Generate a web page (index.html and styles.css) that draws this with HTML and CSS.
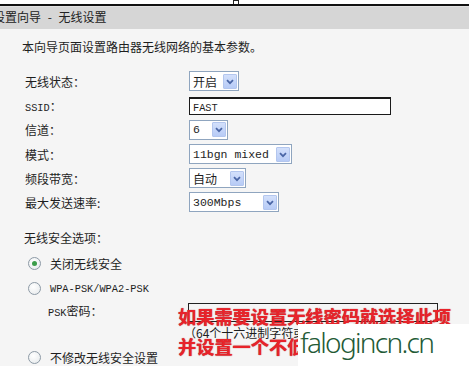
FILE: index.html
```html
<!DOCTYPE html>
<html lang="zh-CN">
<head>
  <meta charset="UTF-8">
  <title>设置向导 - 无线设置</title>
  <link rel="stylesheet" href="styles.css">
</head>
<body>
  <div class="frame">
    <div class="topstrip"><span class="handle"></span></div>
    <div class="title">设置向导 - 无线设置</div>

    <div class="content">
      <p class="intro">本向导页面设置路由器无线网络的基本参数。</p>

      <div class="form">
        <div class="row">
          <span class="label">无线状态：</span>
          <span class="select w-state"><span class="val">开启</span><span class="btn"><svg viewBox="0 0 14 14"><path d="M3.5 5.5 L7 9 L10.5 5.5"/></svg></span></span>
        </div>
        <div class="row">
          <span class="label"><span class="lat">SSID</span>：</span>
          <span class="text-input"><span class="lat">FAST</span></span>
        </div>
        <div class="row">
          <span class="label">信道：</span>
          <span class="select w-chan"><span class="val lat-big">6</span><span class="btn"><svg viewBox="0 0 14 14"><path d="M3.5 5.5 L7 9 L10.5 5.5"/></svg></span></span>
        </div>
        <div class="row">
          <span class="label">模式：</span>
          <span class="select w-mode"><span class="val lat-big">11bgn mixed</span><span class="btn"><svg viewBox="0 0 14 14"><path d="M3.5 5.5 L7 9 L10.5 5.5"/></svg></span></span>
        </div>
        <div class="row">
          <span class="label">频段带宽：</span>
          <span class="select w-band"><span class="val">自动</span><span class="btn"><svg viewBox="0 0 14 14"><path d="M3.5 5.5 L7 9 L10.5 5.5"/></svg></span></span>
        </div>
        <div class="row">
          <span class="label">最大发送速率:</span>
          <span class="select w-rate"><span class="val lat-big">300Mbps</span><span class="btn"><svg viewBox="0 0 14 14"><path d="M3.5 5.5 L7 9 L10.5 5.5"/></svg></span></span>
        </div>
      </div>

      <div class="sec-title">无线安全选项：</div>
      <div class="opt first"><span class="radio on"></span>关闭无线安全</div>
      <div class="opt"><span class="radio"></span><span class="lat">WPA-PSK/WPA2-PSK</span></div>
      <div class="psk">
        <span class="psk-label"><span class="lat">PSK</span>密码：</span>
        <span class="psk-box"></span>
      </div>
      <div class="hint">（64个十六进制字符或8-63个ASCII码字符）</div>
      <div class="opt last"><span class="radio"></span>不修改无线安全设置</div>
    </div>

    <div class="note">如果需要设置无线密码就选择此项<br>并设置一个不低于8位的密码</div>
    <div class="mark">falogincn.cn</div>
  </div>
</body>
</html>
```

FILE: styles.css
```css
body {
  margin: 0;
  background: #f5f5f5;
  font-family: "Noto Sans CJK SC", sans-serif;
  font-size: 12px;
  color: #1e1e1e;
}
.frame {
  position: relative;
  width: 469px;
  height: 366px;
  overflow: hidden;
  background: #f5f5f5;
}
.topstrip {
  height: 4px;
  background: #fff;
  border-bottom: 2px solid #111;
  display: flex;
  justify-content: center;
}
.handle {
  width: 6px;
  height: 4px;
  border: 1px solid #222;
  border-bottom: none;
  margin-left: 2px;
  box-sizing: border-box;
}
.title {
  height: 23px;
  line-height: 19px;
  background: #d6d6d6;
  border-top: 1px solid #e2e2e2;
  box-sizing: border-box;
  text-indent: -7px;
  word-spacing: 4px;
  font-size: 12px;
  color: #222;
  white-space: nowrap;
}
.content {
  padding-left: 22px;
}
.intro {
  margin: 10px 0 0;
  line-height: 16px;
}
.lat {
  font-family: "Liberation Mono", monospace;
  font-size: 10.3px;
}
.lat-big {
  font-family: "Liberation Mono", monospace;
  font-size: 11.5px;
}
.form {
  margin-top: 14.4px;
}
.row {
  height: 24.2px;
  display: grid;
  grid-template-columns: 167px auto;
  align-items: center;
  justify-items: start;
}
.label {
  padding-left: 3px;
  white-space: nowrap;
}
.select {
  height: 20px;
  box-sizing: border-box;
  border: 1px solid #8fa5bf;
  background: #fff;
  display: flex;
  align-items: center;
  justify-content: space-between;
  padding: 0 1px 0 3px;
}
.val {
  white-space: nowrap;
}
.btn {
  width: 14px;
  height: 15px;
  box-sizing: border-box;
  border: 1px solid #b3c6ee;
  border-radius: 1px;
  background: linear-gradient(#d3e0fb, #b7cbf6);
  display: flex;
}
.btn svg {
  width: 12px;
  height: 13px;
  fill: none;
  stroke: #4a66a6;
  stroke-width: 2;
}
.w-state { width: 50px; }
.w-chan { width: 39px; }
.w-mode { width: 103px; }
.w-band { width: 57px; }
.w-rate { width: 90px; }
.text-input {
  width: 202px;
  height: 18px;
  box-sizing: border-box;
  border: 1px solid #1a1a1a;
  border-top-width: 2px;
  background: #fff;
  padding-left: 3px;
  line-height: 14px;
}
.sec-title {
  margin-top: 15.4px;
  line-height: 16px;
  padding-left: 2px;
}
.opt {
  height: 25px;
  display: flex;
  align-items: center;
  gap: 9px;
  padding-left: 6px;
}
.opt.first { margin-top: 5.5px; }
.opt.last { margin-top: 4.5px; }
.radio {
  width: 13px;
  height: 13px;
  box-sizing: border-box;
  border-radius: 50%;
  border: 1px solid #8d9aa6;
  background: radial-gradient(circle at 40% 35%, #fff, #e4e8ea);
  display: flex;
  align-items: center;
  justify-content: center;
}
.radio.on::after {
  content: "";
  width: 5px;
  height: 5px;
  border-radius: 50%;
  background: #3b9d4a;
}
.psk {
  height: 20px;
  margin-top: 1px;
  display: grid;
  grid-template-columns: 166px auto;
  align-items: center;
}
.psk-label {
  padding-left: 26px;
  padding-bottom: 3px;
  white-space: nowrap;
}
.psk-box {
  width: 250px;
  height: 19px;
  box-sizing: border-box;
  border: 1px solid #222;
}
.hint {
  margin-top: 2.5px;
  padding-left: 162px;
  line-height: 16px;
  white-space: nowrap;
  font-size: 12px;
}
.note {
  position: absolute;
  left: 178px;
  top: 301px;
  font-size: 18.2px;
  font-weight: 700;
  line-height: 30px;
  color: #e8232a;
  white-space: nowrap;
  text-shadow: 0 0 1px #a01418;
}
.mark {
  position: absolute;
  left: 298px;
  top: 324px;
  right: 0;
  bottom: 0;
  background: #fff;
  color: #235a36;
  font-family: "Noto Sans", sans-serif;
  font-weight: 300;
  font-size: 28px;
  letter-spacing: -1.7px;
  line-height: 36px;
  padding-left: 2px;
  white-space: nowrap;
}
```
